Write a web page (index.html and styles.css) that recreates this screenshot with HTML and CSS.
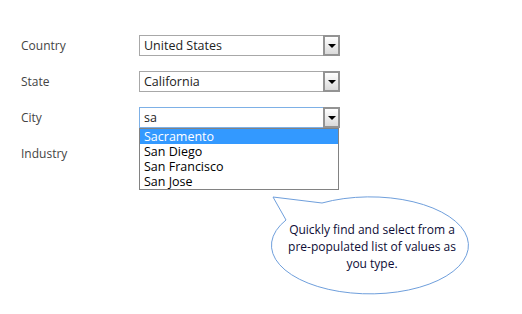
FILE: index.html
```html
<!DOCTYPE html>
<html lang="en">
<head>
<meta charset="UTF-8" />
<title>Cascading lookup</title>
<link rel="stylesheet" href="styles.css">
</head>
<body>

<div class="panel">
  <div class="row">
    <span class="label">Country</span>
    <div class="combo">
      <span class="value">United States</span>
      <span class="btn"><span class="arrow"></span></span>
    </div>
  </div>

  <div class="row">
    <span class="label">State</span>
    <div class="combo">
      <span class="value">California</span>
      <span class="btn"><span class="arrow"></span></span>
    </div>
  </div>

  <div class="row">
    <span class="label">City</span>
    <div class="combo active">
      <span class="value">sa</span>
      <span class="btn"><span class="arrow"></span></span>
      <ul class="list">
        <li class="selected">Sacramento</li>
        <li>San Diego</li>
        <li>San Francisco</li>
        <li>San Jose</li>
      </ul>
    </div>
  </div>

  <div class="row">
    <span class="label">Industry</span>
  </div>
</div>

<div class="callout">
  <svg class="bubble" width="210" height="110" viewBox="266 190 210 110">
    <path d="M286 220 L273 197 L322 203 A98.5 48.5 0 1 1 286 220 Z" fill="#fff" stroke="#6f9fdc" stroke-width="1"/>
  </svg>
  <p class="tip">Quickly find and select from a pre-populated list of values as you type.</p>
</div>

</body>
</html>
```

FILE: styles.css
```css
body {
  margin: 0;
  background: white;
  font-family: 'Open Sans', 'Noto Sans', sans-serif;
  width: 522px;
  height: 314px;
  position: relative;
}
.panel {
  padding: 35px 0 0 21px;
  display: flex;
  flex-direction: column;
  gap: 15px;
}
.row {
  display: grid;
  grid-template-columns: 118px 201px;
  height: 21px;
  align-items: center;
}
.label {
  font-size: 12px;
  color: #444;
  line-height: 21px;
}
.combo {
  position: relative;
  display: flex;
  height: 21px;
  box-sizing: border-box;
  border: 1px solid #a8a8a8;
  background: white;
}
.combo.active {
  border-color: #7db0e6;
}
.value {
  flex: 1;
  padding-left: 4px;
  font-size: 12.5px;
  line-height: 19px;
  color: #222;
}
.btn {
  width: 17px;
  margin: -1px -1px -1px 0;
  box-sizing: border-box;
  border: 2px solid #939393;
  background: linear-gradient(#ffffff, #dadada);
  display: flex;
  align-items: center;
  justify-content: center;
}
.arrow {
  width: 0;
  height: 0;
  border-left: 4px solid transparent;
  border-right: 4px solid transparent;
  border-top: 4px solid #000;
}
.list {
  position: absolute;
  top: 20px;
  left: -1px;
  width: 200px;
  margin: 0;
  padding: 0;
  list-style: none;
  box-sizing: border-box;
  border: 1px solid #828282;
  background: white;
  z-index: 2;
}
.list li {
  font-size: 12.5px;
  line-height: 15px;
  height: 15px;
  padding-left: 4px;
  color: #000;
}
.list li.selected {
  background: #3399ff;
  color: white;
}
.callout {
  position: absolute;
  left: 266px;
  top: 190px;
  width: 210px;
  height: 110px;
}
.bubble {
  display: block;
}
.tip {
  position: absolute;
  left: 16px;
  top: 31px;
  width: 180px;
  margin: 0;
  text-align: center;
  font-size: 12px;
  line-height: 17px;
  color: #0c0c36;
}
```
